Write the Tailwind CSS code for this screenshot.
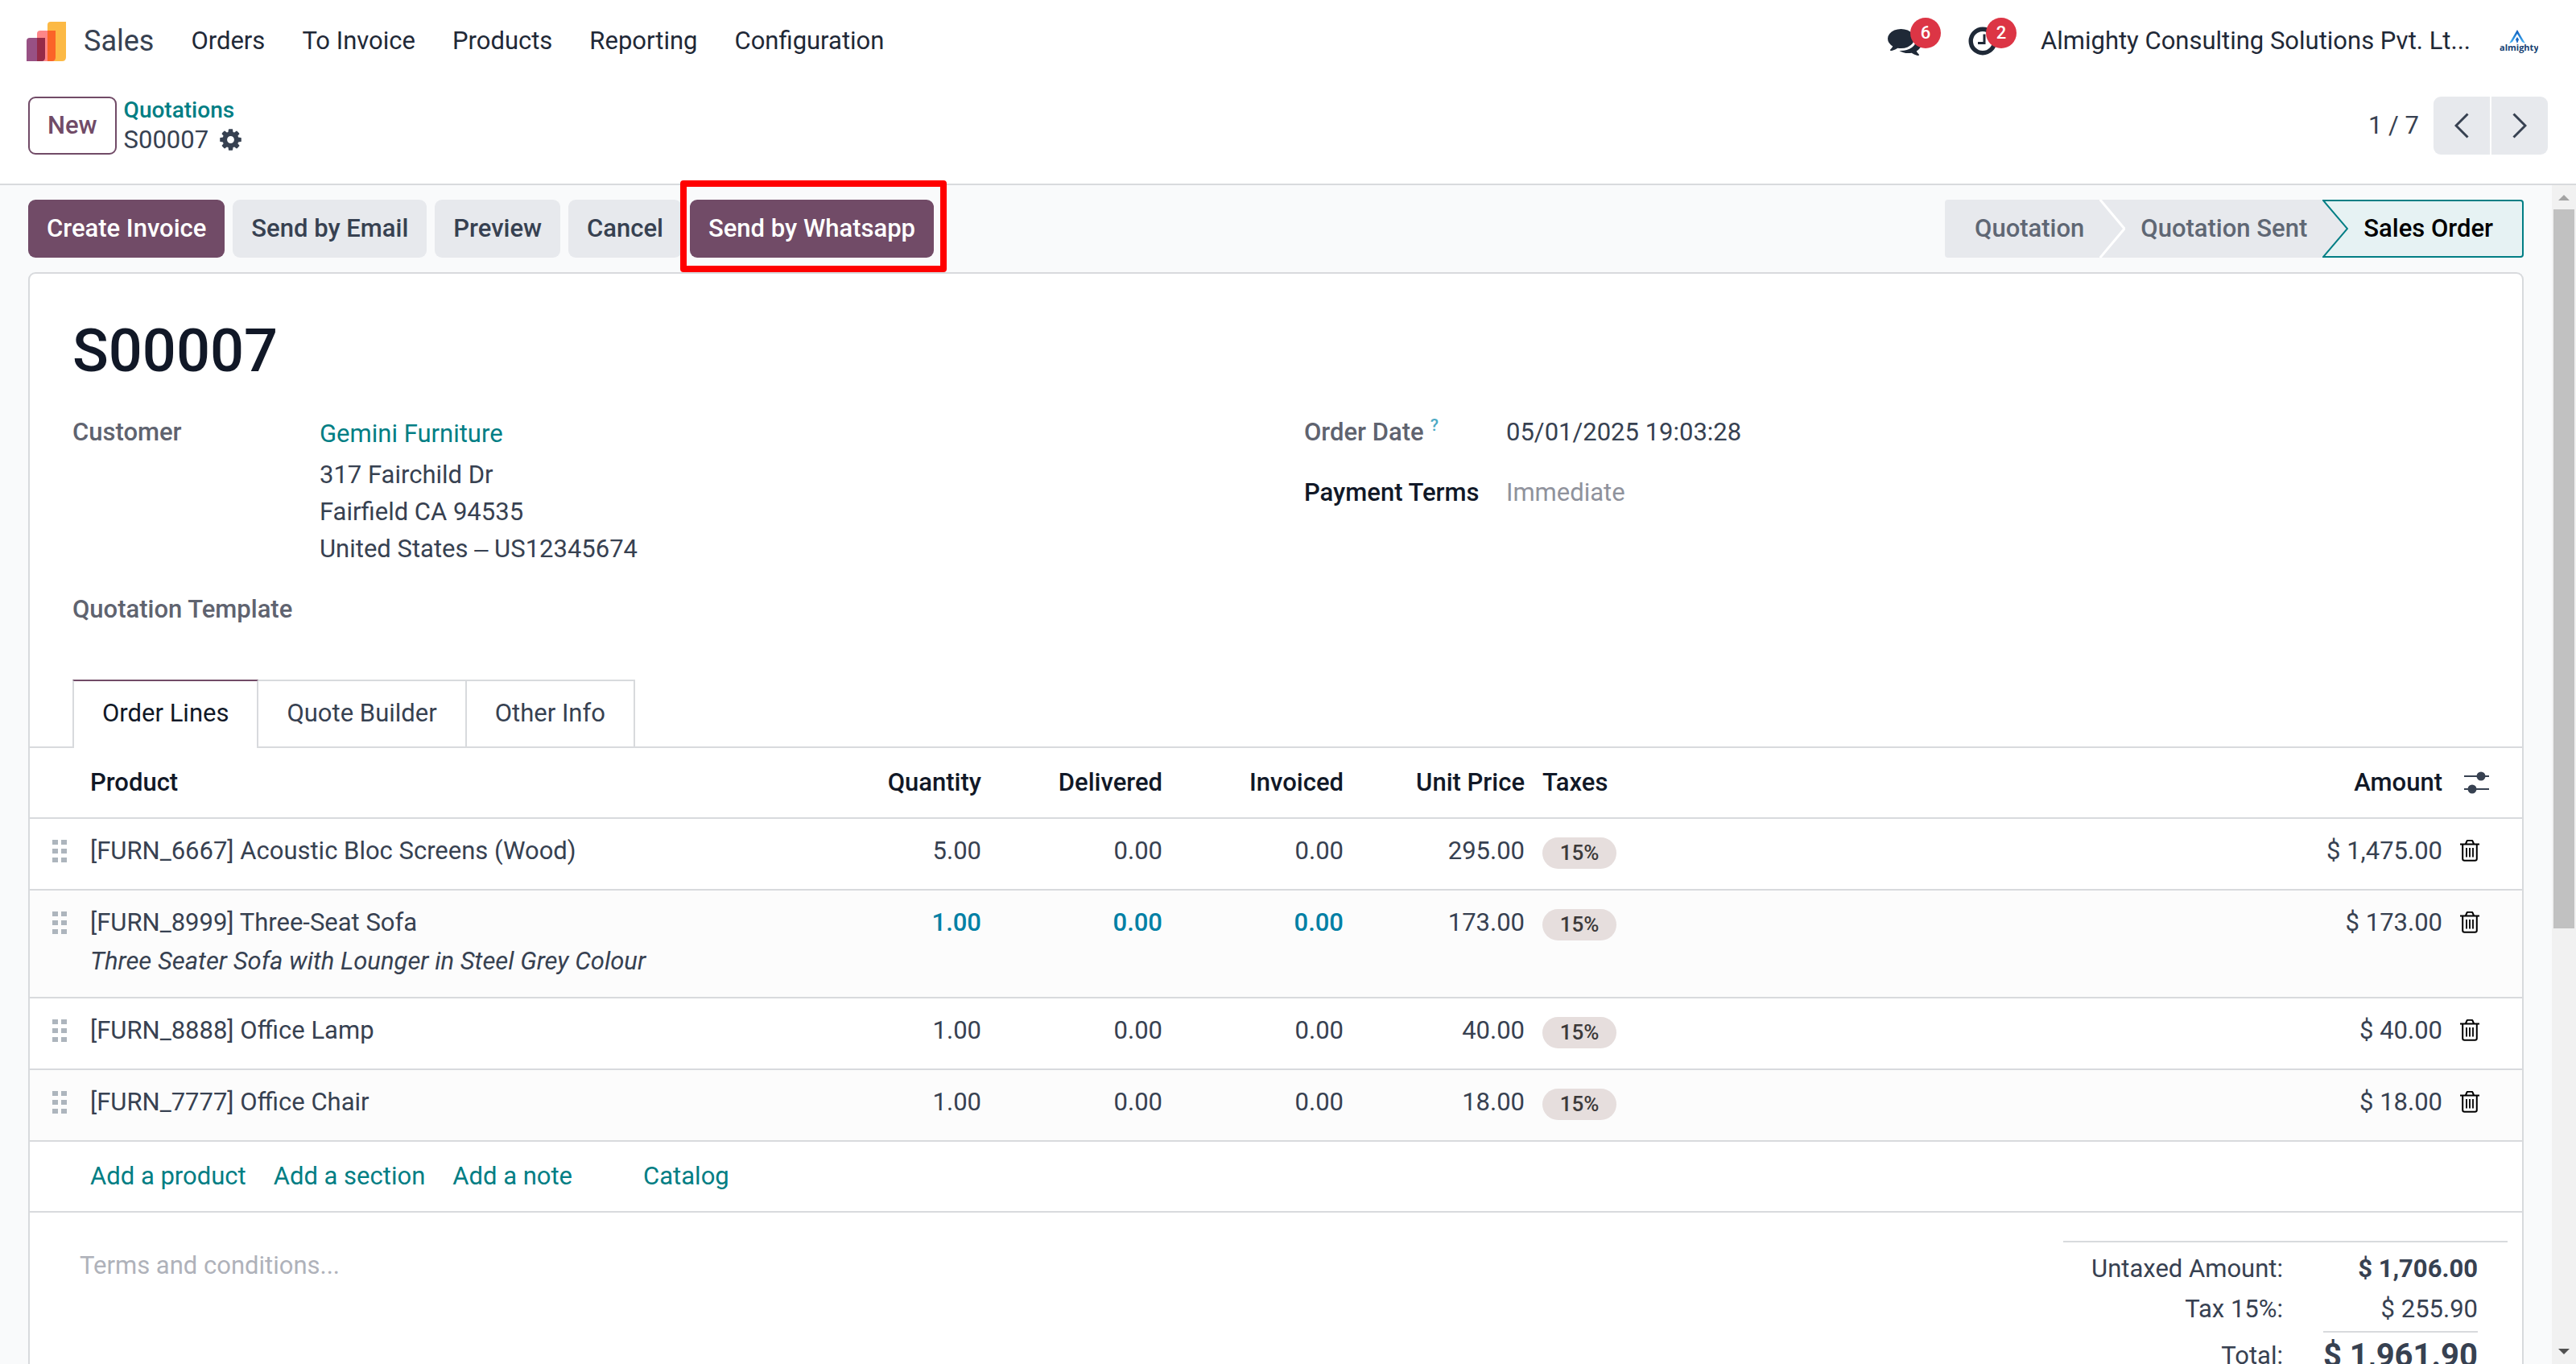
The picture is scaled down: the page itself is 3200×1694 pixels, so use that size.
<!DOCTYPE html>
<html lang="en">

<head>
    <meta charset="UTF-8">
    <meta name="viewport" content="width=device-width, initial-scale=1.0">
    <title>S00007 - Sales</title>
    <script src="https://cdn.jsdelivr.net/npm/@tailwindcss/browser@4"></script>
</head>

<body class="h-screen overflow-hidden flex flex-col bg-white font-[Roboto,sans-serif] text-[31px] leading-[46px] text-[#374151]">

    <!-- icons used more than once -->
    <svg class="hidden">
        <symbol id="icon-trash" viewBox="0 0 24 27">
            <path d="M0 5.500h24M7 5l1.500-3.500q.4-.8 1.200-.8h4.600q.8 0 1.200.8L17 5M3.200 6v17.500q0 2.300 2.300 2.300h13q2.300 0 2.300-2.300V6" fill="none" stroke="#000" stroke-width="2" />
            <path d="M8 10v11.500M12 10v11.500M16 10v11.500" fill="none" stroke="#000" stroke-width="1.800" />
        </symbol>
        <symbol id="icon-handle" viewBox="0 0 18 30">
            <path d="M0 1h7v6H0zM11 1h7v6h-7zM0 12h7v6H0zM11 12h7v6h-7zM0 23h7v6H0zM11 23h7v6h-7z" fill="#adb5bd" />
        </symbol>
    </svg>

    <header class="flex items-center h-[102px] pl-[33px] pr-[47px] shrink-0 text-[#1f2937]">
        <svg class="w-[49px] h-[49px]" viewBox="0 0 49 49">
            <path d="M26 4q0-4 4-4h19v44q0 5-5 5H26z" fill="#fcb945" />
            <path d="M13 15q0-4 4-4h19v33q0 5-5 5H13z" fill="#fd8688" />
            <path d="M0 24q0-4 4-4h19v24q0 5-5 5H0z" fill="#985184" />
            <path d="M26 11h10v33q0 5-5 5h-5z" fill="#fb6428" />
            <path d="M13 20h10v24q0 5-5 5h-5z" fill="#962b48" />
        </svg>
        <a href="#" class="ml-[22px] text-[36px] text-[#374151]">Sales</a>
        <nav class="flex gap-[46px] ml-[46px]">
            <a href="#">Orders</a>
            <a href="#">To Invoice</a>
            <a href="#">Products</a>
            <a href="#">Reporting</a>
            <a href="#">Configuration</a>
        </nav>
        <div class="flex items-center ml-auto">
            <button class="relative" aria-label="Messages">
                <svg class="w-[42px] h-[42px]" viewBox="0 0 1792 1792" fill="#1f2937">
                    <path d="M1408 768q0 139-94 257t-256.500 186.500-353.500 68.500q-86 0-176-16-124 88-278 128-36 9-86 16h-3q-11 0-20.500-8t-11.500-21q-1-3-1-6.500t.5-6.500 2-6l2.500-5 3.500-5.500 4-5 4.500-5 4-4.500q5-6 23-25t26-29.500 22.500-29 25-38.500 20.500-44q-124-72-195-177t-71-224q0-139 94-257t256.500-186.500 353.500-68.500 353.500 68.500 256.500 186.500 94 257zm384 256q0 120-71 224.500t-195 176.500q10 24 20.500 44t25 38.500 22.500 29 26 29.500 23 25q1 1 4 4.500t4.500 5 4 5 3.500 5.500l2.500 5 2 6 .5 6.500-1 6.500q-3 14-13 22t-22 7q-50-7-86-16-154-40-278-128-90 16-176 16-271 0-472-132 58 4 88 4 161 0 309-45t264-129q125-92 192-212t67-254q0-77-23-152 129 71 204 178t75 230z" />
                </svg>
                <span class="absolute left-7 -top-2 w-[38px] h-[38px] rounded-full bg-[#dc3545] text-white text-[22px] leading-[38px] font-medium text-center">6</span>
            </button>
            <button class="relative ml-[58px]" aria-label="Activities">
                <svg class="w-[36px] h-[36px]" viewBox="0 0 36 36" fill="none" stroke="#1f2937">
                    <circle cx="18" cy="18" r="14.800" stroke-width="5.400" />
                    <path d="M20 9.500v11h-8" stroke-width="3" />
                </svg>
                <span class="absolute left-[22px] -top-[11px] w-[38px] h-[38px] rounded-full bg-[#dc3545] text-white text-[22px] leading-[38px] font-medium text-center">2</span>
            </button>
            <span class="ml-[54px]">Almighty Consulting Solutions Pvt. Lt...</span>
            <svg class="ml-9 w-[48px] h-[35px]" viewBox="0 0 48 35">
                <defs>
                    <linearGradient id="peak" x1="0" y1="0" x2="0" y2="1">
                        <stop offset="0" stop-color="#0a56b8" />
                        <stop offset="1" stop-color="#45b6f7" />
                    </linearGradient>
                </defs>
                <path d="M22 3l-10 17 4-2 6-10 6 10 4 2z" fill="url(#peak)" />
                <path d="M22 12l2 3-2 5-2-5z" fill="#1668c4" />
                <text x="0" y="29" font-family="Open Sans, sans-serif" font-size="11" font-weight="700" fill="#163f73">almighty</text>
            </svg>
        </div>
    </header>

    <div class="flex items-center h-[126px] pb-[19px] px-[35px] shrink-0">
        <button class="h-[72px] px-[22px] border-2 border-[#714b67] rounded-[9px] font-medium text-[#714b67]">New</button>
        <div class="ml-[9px]">
            <a href="#" class="block text-[28px] leading-[36px] font-medium text-[#017e84]">Quotations</a>
            <div class="flex items-center leading-[38px]">
                <span>S00007</span>
                <button class="ml-3" aria-label="Actions">
                    <svg class="w-[31px] h-[31px]" viewBox="0 0 1792 1792" fill="#374151">
                        <path d="M1152 896q0-106-75-181t-181-75-181 75-75 181 75 181 181 75 181-75 75-181zm512-109v222q0 12-8 23t-20 13l-185 28q-19 54-39 91 35 50 107 138 10 12 10 25t-9 23q-27 37-99 108t-94 71q-12 0-26-9l-138-108q-44 23-91 38-16 136-29 186-7 28-36 28h-222q-14 0-24.500-8.500t-11.500-21.500l-28-184q-49-16-90-37l-141 107q-10 9-25 9-14 0-25-11-126-114-165-168-7-10-7-23 0-12 8-23 15-21 51-66.500t54-70.500q-27-50-41-99l-183-27q-13-2-21-12.500t-8-23.500v-222q0-12 8-23t19-13l186-28q14-46 39-92-40-57-107-138-10-12-10-24 0-10 9-23 26-36 98.500-107.500t94.500-71.500q13 0 26 10l138 107q44-23 91-38 16-136 29-186 7-28 36-28h222q14 0 24.500 8.500t11.500 21.500l28 184q49 16 90 37l142-107q9-9 24-9 13 0 25 10 129 119 165 170 7 8 7 22 0 12-8 23-15 21-51 66.500t-54 70.500q26 50 41 98l183 28q13 2 21 12.500t8 23.500z" />
                    </svg>
                </button>
            </div>
        </div>
        <span class="ml-auto">1 / 7</span>
        <div class="flex gap-[2px] ml-[18px]">
            <button class="w-[70px] h-[72px] flex items-center justify-center bg-[#e7e9ed] rounded-l-[9px]" aria-label="Previous">
                <svg class="w-[18px] h-[32px]" viewBox="0 0 18 32" fill="none" stroke="#374151" stroke-width="3"><path d="M16.500 1.500L2 16l14.500 14.500" /></svg>
            </button>
            <button class="w-[70px] h-[72px] flex items-center justify-center bg-[#e7e9ed] rounded-r-[9px]" aria-label="Next">
                <svg class="w-[18px] h-[32px]" viewBox="0 0 18 32" fill="none" stroke="#374151" stroke-width="3"><path d="M1.500 1.500L16 16 1.500 30.500" /></svg>
            </button>
        </div>
    </div>

    <div class="flex flex-1 min-h-0 bg-[#f9fafb] border-t-2 border-[#d8dadd]">
        <main class="flex-1 flex flex-col min-w-0 px-[35px] pt-[18px]">

            <div class="flex justify-between h-[90px] shrink-0">
                <div class="flex gap-[10px] font-medium">
                    <button class="h-[72px] px-[23px] rounded-[9px] bg-[#714b67] text-white">Create Invoice</button>
                    <button class="h-[72px] px-[23px] rounded-[9px] bg-[#e7e9ed]">Send by Email</button>
                    <button class="h-[72px] px-[23px] rounded-[9px] bg-[#e7e9ed]">Preview</button>
                    <button class="h-[72px] px-[23px] rounded-[9px] bg-[#e7e9ed]">Cancel</button>
                    <div class="relative h-[72px]">
                        <button class="h-[72px] px-[23px] rounded-[9px] bg-[#714b67] text-white">Send by Whatsapp</button>
                        <div class="absolute z-10 -left-3 -right-4 -top-6 -bottom-[18px] border-8 border-[#ff0000] rounded-[4px]"></div>
                    </div>
                </div>
                <div class="flex h-[72px] font-medium text-[#5f6774]">
                    <button class="pl-[37px] pr-[19px] bg-[#e7e9ed] rounded-l-[4px]">Quotation</button>
                    <svg class="w-[32px] h-[72px] bg-[#e7e9ed]" viewBox="0 0 32 72"><path d="M0-1l31 37L0 73" fill="none" stroke="#fff" stroke-width="3" /></svg>
                    <button class="px-[19px] bg-[#e7e9ed]">Quotation Sent</button>
                    <svg class="w-[32px] h-[72px]" viewBox="0 0 32 72">
                        <path d="M0 0l31 36L0 72z" fill="#e7e9ed" />
                        <path d="M33 1H1l30 35L1 71h32" fill="#e6f2f3" stroke="#017e84" stroke-width="2" />
                    </svg>
                    <button class="pl-[19px] pr-9 border-2 border-l-0 border-[#017e84] rounded-r-[4px] bg-[#e6f2f3] text-black">Sales Order</button>
                </div>
            </div>

            <div class="flex-1 min-h-0 overflow-hidden bg-white border-2 border-b-0 border-[#d8dadd] rounded-t-[9px]">
                <h1 class="mt-[52px] px-[53px] text-[74px] leading-[88px] font-medium text-[#111827]">S00007</h1>

                <div class="grid grid-cols-2 gap-x-[70px] mt-[34px] px-[53px]">
                    <div class="grid grid-cols-[307px_1fr] gap-y-[29px] content-start">
                        <span class="font-medium text-[#5f636f]">Customer</span>
                        <div class="pt-[2px]">
                            <a href="#" class="block mb-[5px] text-[#017e84]">Gemini Furniture</a>
                            <div>317 Fairchild Dr</div>
                            <div>Fairfield CA 94535</div>
                            <div>United States ‒ US12345674</div>
                        </div>
                        <label for="quotation-template" class="font-medium text-[#5f636f]">Quotation Template</label>
                        <input type="text" id="quotation-template" class="min-w-0 h-[46px] outline-none">
                    </div>
                    <div class="grid grid-cols-[251px_1fr] gap-y-[29px] content-start">
                        <label for="order-date" class="flex font-medium text-[#5f636f]">Order Date <sup class="top-0 ml-2 text-[21px] leading-[28px] text-[#4ca9c4]">?</sup></label>
                        <input type="text" id="order-date" value="05/01/2025 19:03:28" class="min-w-0 h-[46px] outline-none">
                        <label for="payment-terms" class="font-medium text-[#111827]">Payment Terms</label>
                        <input type="text" id="payment-terms" placeholder="Immediate" class="min-w-0 h-[46px] outline-none placeholder:text-[#8f929c]">
                    </div>
                </div>

                <div class="flex mt-[64px] pl-[53px] border-b-2 border-[#d8dadd]">
                    <button class="h-[85px] -mb-[2px] px-[35px] pb-1 bg-white border-x-2 border-t-2 border-x-[#d8dadd] border-t-[#714b67] text-[#111827]">Order Lines</button>
                    <button class="h-[83px] px-[35px] pb-[2px] border-t-2 border-r-2 border-[#d8dadd]">Quote Builder</button>
                    <button class="h-[83px] px-[35px] pb-[2px] border-t-2 border-r-2 border-[#d8dadd]">Other Info</button>
                </div>

                <table class="w-full table-fixed">
                    <thead>
                        <tr class="h-[87px] border-b-2 border-[#d8dadd] font-medium text-[#111827] text-right">
                            <th class="w-[64px]"></th>
                            <th class="w-[904px] px-[11px] font-medium text-left">Product</th>
                            <th class="w-[225px] px-[11px] font-medium">Quantity</th>
                            <th class="w-[225px] px-[11px] font-medium">Delivered</th>
                            <th class="w-[225px] px-[11px] font-medium">Invoiced</th>
                            <th class="w-[225px] px-[11px] font-medium">Unit Price</th>
                            <th class="px-[11px] font-medium text-left">Taxes</th>
                            <th class="w-[300px] px-[11px] font-medium">Amount</th>
                            <th class="w-[88px] pl-4">
                                <button class="block" aria-label="Columns">
                                    <svg class="w-[31px] h-[28px]" viewBox="0 0 31 28" fill="#374151">
                                        <path d="M0 5h31v2H0zM0 21h31v2H0z" />
                                        <circle cx="21" cy="6" r="5.500" />
                                        <circle cx="10" cy="22" r="5.500" />
                                    </svg>
                                </button>
                            </th>
                        </tr>
                    </thead>
                    <tbody id="order-lines"></tbody>
                </table>

                <div class="flex items-center gap-[34px] h-[88px] pl-[75px] border-b-2 border-[#d8dadd] text-[#017e84]">
                    <a href="#">Add a product</a>
                    <a href="#">Add a section</a>
                    <a href="#">Add a note</a>
                    <a href="#" class="ml-[54px]">Catalog</a>
                </div>

                <div class="flex justify-between pt-[35px] pl-[62px] pr-[18px]">
                    <textarea aria-label="Terms and conditions" placeholder="Terms and conditions..." class="w-[1200px] h-[120px] mt-2 resize-none outline-none placeholder:text-[#afb2ba]"></textarea>
                    <div class="flex justify-end w-[552px] pr-[37px] border-t-2 border-[#d8dadd] text-right whitespace-nowrap">
                        <div class="mt-[10px]">
                            <div>Untaxed Amount:</div>
                            <div class="mt-1">Tax 15%:</div>
                            <div class="mt-3">Total:</div>
                        </div>
                        <div class="mt-[10px] ml-[50px]">
                            <div class="font-bold">$ 1,706.00</div>
                            <div class="mt-1">$ 255.90</div>
                            <div class="mt-1 pt-[6px] border-t-2 border-[#d8dadd] text-[40px] font-bold">$ 1,961.90</div>
                        </div>
                    </div>
                </div>
            </div>
        </main>

        <div class="flex flex-col items-center w-[30px] shrink-0 bg-[#f1f1f1]">
            <svg class="w-[14px] h-[30px]" viewBox="0 0 14 30"><path d="M7 12l7 7H0z" fill="#a3a3a3" /></svg>
            <div class="w-[26px] h-[893px] bg-[#c1c1c1]"></div>
            <svg class="w-[14px] h-[30px] mt-auto" viewBox="0 0 14 30"><path d="M7 18l7-7H0z" fill="#505050" /></svg>
        </div>
    </div>

    <script>
        const lines = [
            { name: '[FURN_6667] Acoustic Bloc Screens (Wood)', qty: '5.00', price: '295.00', amount: '1,475.00' },
            { name: '[FURN_8999] Three-Seat Sofa', note: 'Three Seater Sofa with Lounger in Steel Grey Colour', qty: '1.00', price: '173.00', amount: '173.00', pending: true },
            { name: '[FURN_8888] Office Lamp', qty: '1.00', price: '40.00', amount: '40.00' },
            { name: '[FURN_7777] Office Chair', qty: '1.00', price: '18.00', amount: '18.00' }
        ];

        const tableBody = document.getElementById('order-lines');

        lines.forEach(line => {
            const numberClass = line.pending ? 'px-[11px] font-medium text-[#0180a5]' : 'px-[11px]';
            const row = document.createElement('tr');
            row.className = 'h-[89px] border-b-2 border-[#d8dadd] align-top text-right even:bg-[#fcfcfc] [&>td]:pt-[17px]';
            row.innerHTML = `
                <td class="pl-7"><svg class="w-[18px] h-[30px] mt-2"><use href="#icon-handle"></use></svg></td>
                <td class="px-[11px] pb-[21px] text-left">
                    ${line.name}
                    ${line.note ? `<div class="mt-[2px] italic">${line.note}</div>` : ''}
                </td>
                <td class="${numberClass}">${line.qty}</td>
                <td class="${numberClass}">0.00</td>
                <td class="${numberClass}">0.00</td>
                <td class="px-[11px]">${line.price}</td>
                <td class="px-[11px]"><span class="block w-[92px] h-[39px] mt-[6px] rounded-full bg-[#e6dedd] text-[26px] leading-[39px] font-medium text-center text-[#3c3a3a]">15%</span></td>
                <td class="px-[11px]">$ ${line.amount}</td>
                <td class="pl-[11px]"><button class="block mt-[9px]" aria-label="Delete line"><svg class="w-[24px] h-[27px]"><use href="#icon-trash"></use></svg></button></td>
            `;
            tableBody.appendChild(row);
        });
    </script>

</body>

</html>
